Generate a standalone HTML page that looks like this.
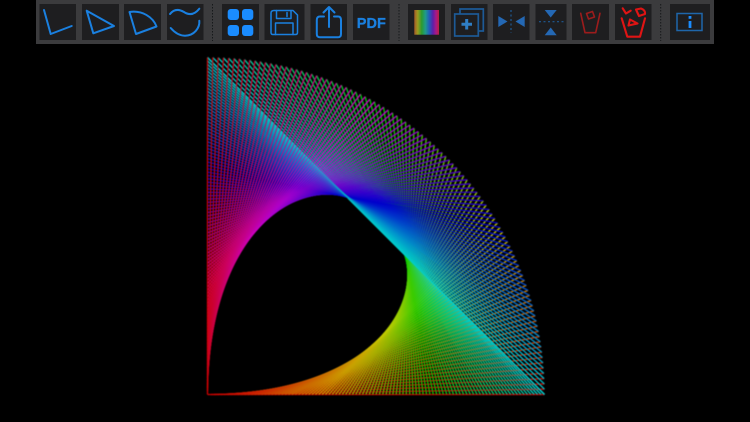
<!DOCTYPE html>
<html>
<head>
<meta charset="utf-8">
<style>
html,body{margin:0;padding:0;background:#000;width:750px;height:422px;overflow:hidden}
#art,#ui{position:absolute;left:0;top:0}
#art{filter:blur(.5px)}
#ui{filter:blur(.35px)}
</style>
</head>
<body>
<canvas id="art" width="1500" height="844" style="width:750px;height:422px"></canvas>
<svg id="ui" width="750" height="422" viewBox="0 0 750 422" fill="none" stroke-linecap="round" stroke-linejoin="round">
<defs>
<linearGradient id="rb" x1="0" x2="1" y1="0" y2="0">
<stop offset="0" stop-color="#a85a28"/>
<stop offset=".14" stop-color="#9a9a20"/>
<stop offset=".3" stop-color="#2a9a30"/>
<stop offset=".45" stop-color="#1f9a8a"/>
<stop offset=".6" stop-color="#2060b8"/>
<stop offset=".75" stop-color="#5c20a8"/>
<stop offset=".88" stop-color="#a81888"/>
<stop offset="1" stop-color="#b82040"/>
</linearGradient>
</defs>
<rect x="36" y="0" width="678" height="44" fill="#3b3b3d"/>
<g fill="#1e1e20">
<rect x="39.5" y="4" width="36.5" height="36"/>
<rect x="82" y="4" width="37" height="36"/>
<rect x="124" y="4" width="37" height="36"/>
<rect x="167" y="4" width="36.5" height="36"/>
<rect x="222" y="4" width="37" height="36"/>
<rect x="264.5" y="4" width="40" height="36"/>
<rect x="310.5" y="4" width="36.5" height="36"/>
<rect x="353" y="4" width="36.5" height="36"/>
<rect x="408" y="4" width="37" height="36"/>
<rect x="451" y="4" width="36.5" height="36"/>
<rect x="493" y="4" width="36.5" height="36"/>
<rect x="535.5" y="4" width="31" height="36"/>
<rect x="572" y="4" width="37" height="36"/>
<rect x="615" y="4" width="36.5" height="36"/>
<rect x="670" y="4" width="40" height="36"/>
</g>
<g stroke="#16181a" stroke-width="1" stroke-dasharray="1.5 1.5" stroke-linecap="butt">
<path d="M212.5 4V41M399 4V41M660.7 4V41"/>
</g>
<g stroke="#1a80e0" stroke-width="2">
<path d="M44 10L50.7 34L71.7 26"/>
<path d="M86.7 10.7L93.3 33.3L114 26Z"/>
<path d="M129.5 12L136 34L156.5 26.5C153 17 142 10 129.5 12Z"/>
<path d="M170 14C174 9 179 9 184 12C190 16 195 14 199.3 8.7"/>
<path d="M170.7 28C175 33 180 35.7 185 35.7C194 35.7 200 28 199.3 20.7"/>
</g>
<g fill="#1a8cff">
<rect x="227.7" y="9" width="11.3" height="11" rx="3"/>
<rect x="242" y="9" width="11.3" height="11" rx="3"/>
<rect x="227.7" y="25" width="11.3" height="11" rx="3"/>
<rect x="242" y="25" width="11.3" height="11" rx="3"/>
</g>
<g stroke="#1a80e0" stroke-width="1.5">
<path d="M274 10.5H293L297.5 15V32.5Q297.5 34.5 295.5 34.5H273Q271 34.5 271 32.5V13Q271 10.5 274 10.5Z"/>
<path d="M276.5 10.5V18.5H291V10.5"/>
<path d="M287 12.5V16.5"/>
<path d="M275.5 34.5V23H293V34.5"/>
</g>
<g stroke="#1a80e0" stroke-width="2">
<path d="M324 16.5H320Q316.8 16.5 316.8 20V34Q316.8 37.3 320 37.3H338Q341 37.3 341 34V20Q341 16.5 338 16.5H334"/>
<path d="M329 27V7M323.5 12.5L329 7L334.5 12.5"/>
</g>
<text x="371.3" y="28" text-anchor="middle" font-family="'Liberation Sans',sans-serif" font-weight="700" font-size="14.5" fill="#1a80e0" stroke="#1a80e0" stroke-width=".3">PDF</text>
<rect x="414.3" y="10" width="24.7" height="24.7" fill="url(#rb)"/>
<g stroke="#1d5a96" stroke-width="1.7" stroke-linejoin="miter" stroke-linecap="butt">
<rect x="454.7" y="14" width="23.6" height="22"/>
<path d="M460 14V9H483.3V31H478.3"/>
</g>
<path d="M466.7 19V29.5M461.5 24.2H472" stroke="#2f7ec4" stroke-width="3" stroke-linecap="butt"/>
<g fill="#2468b4">
<path d="M498.3 16V27L507.5 21.5Z"/>
<path d="M524.7 16V27L515.5 21.5Z"/>
<path d="M544.7 10H556.7L550.7 17.5Z"/>
<path d="M544.7 35.3H556.7L550.7 27.5Z"/>
</g>
<g stroke="#1f5a94" stroke-width="1.2" stroke-dasharray="2 2.5" stroke-linecap="butt">
<path d="M511 10V33"/>
<path d="M539 21.7H563.5"/>
</g>
<g stroke="#9c1c1c" stroke-width="1.6">
<path d="M580.7 13.3L585 32.7H595.7L600 13.3"/>
<path d="M586.5 13.5L592.5 11.5L594.5 17L588.5 19Z"/>
</g>
<g stroke="#e01414" stroke-width="2.1">
<path d="M621.7 18.3L627.3 36.7H640L645 18.3"/>
<path d="M622.7 8.3L626 13.5L630.7 10.7"/>
<path d="M636 9.5L641 8.5Q645.5 10 645 14L639 16Z"/>
<path d="M630 19.5L637.5 23.5L628.5 25.5Z"/>
</g>
<rect x="677" y="13.5" width="25" height="17" stroke="#1f66aa" stroke-width="1.5" stroke-linejoin="miter"/>
<path d="M690 21V28" stroke="#1a8cff" stroke-width="2.8" stroke-linecap="butt"/>
<rect x="688.6" y="16" width="2.8" height="2.8" fill="#1a8cff"/>
</svg>
<script>
(function(){
var c=document.getElementById('art'),g=c.getContext('2d');
g.scale(2,2);
var R=337,X=207.5,Y=394.5,N=100;
g.lineWidth=1.3;
function P(x,y){return [X+x,Y-y];}
function seg(p,q,h,al){
  g.globalAlpha=al;
  g.strokeStyle='hsl('+h+',100%,40%)';
  g.beginPath();g.moveTo(p[0],p[1]);g.lineTo(q[0],q[1]);g.stroke();
}
function f1(i,al){
  var t=i/N,a=t*Math.PI/2;
  seg(P(0,R*t),P(R*Math.sin(a),R*Math.cos(a)),360-180*t,al);
}
function f2(i,al){
  var t=i/N,a=t*Math.PI/2;
  seg(P(R*Math.sin(a),R*Math.cos(a)),P(R*(1-t),0),180-180*t,al);
}
var i;
for(i=N;i>=0;i--)f2(i,1);
for(i=0;i<=N;i++)f2(i,.35);
for(i=N;i>=0;i--)f1(i,1);
for(i=0;i<=N;i++)f1(i,.2);
g.globalAlpha=1;
})();
</script>
</body>
</html>
